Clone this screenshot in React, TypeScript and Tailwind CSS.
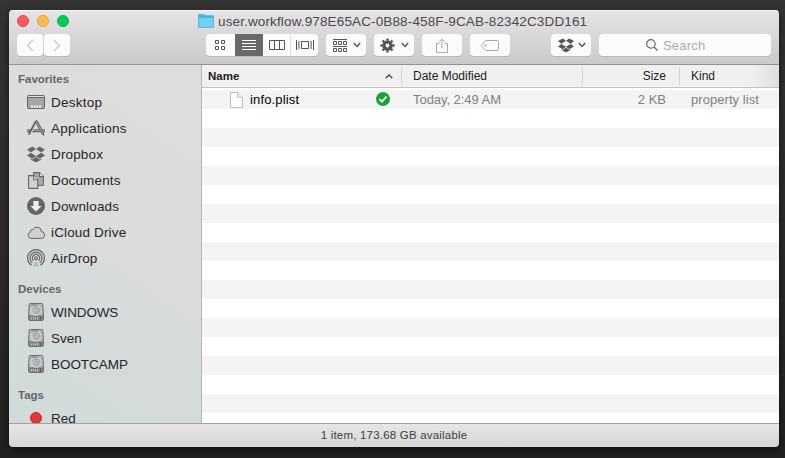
import React from "react";

const font = "font-['Liberation_Sans',Arial,sans-serif]";

const DropboxIcon = ({ className = "" }: { className?: string }) => (
  <svg className={className} viewBox="0 0 18 16" fill="currentColor">
    <path d="M5.4 0 9 2.6 3.7 5.9 0 3Z" />
    <path d="M12.6 0 9 2.6l5.3 3.3L18 3Z" />
    <path d="M0 9.1 3.7 6.2 9 9.5 5.4 12.2Z" />
    <path d="M18 9.1 14.3 6.2 9 9.5l3.6 2.7Z" />
    <path d="M9 10.2 5.4 13 3.8 12v1.2L9 16l5.2-2.8V12l-1.6 1Z" />
  </svg>
);

const DesktopIcon = () => (
  <svg width="18" height="14" viewBox="0 0 18 14">
    <rect x=".5" y=".5" width="17" height="13" rx="1" fill="#a6a6a6" stroke="#666" />
    <path d="M1 1.5h16" stroke="#e2e2e2" />
    <path d="M1 2.5h16" stroke="#666" />
    <path d="M4 10.5h10V13H4Z" fill="#eee" />
    <path d="M6.5 10.5V13M9 10.5V13M11.5 10.5V13" stroke="#999" strokeWidth=".8" />
  </svg>
);

const AppsIcon = () => (
  <svg width="18" height="16" viewBox="0 0 18 16" fill="none" stroke="#666">
    <path d="M8.6 1.6 1.8 14.6" strokeWidth="2" />
    <path d="M8.2 1.2 9.6.6l1 .6 5.8 11.6.4 2.6-1.9-1.4Z" fill="#999" strokeWidth="1" />
    <path d="M0 9.9h4M6.2 9.9h6M15 9.9h3M0 11.6h3M5.4 11.6h7.6M16 11.6h2" strokeWidth="1.1" />
  </svg>
);

const DocsIcon = () => (
  <svg width="16" height="17" viewBox="0 0 16 17" fill="#d2d2d2" stroke="#656565" strokeWidth="1.1">
    <path d="M5.6.6h6l3.8 3.8v8.8H5.6Z" fill="#aaa" />
    <path d="M11.5.6v4h4" fill="#e5e5e5" />
    <path d="M.6 3.6h5.2l4 4v8.8H.6Z" />
    <path d="M5.7 3.6v4.2h4.1" fill="#eee" />
  </svg>
);

const DownloadsIcon = () => (
  <svg width="18" height="18" viewBox="0 0 18 18">
    <circle cx="9" cy="9" r="9" fill="#666" />
    <path d="M6.4 4h5.2v5h3L9 14.4 3.4 9h3Z" fill="#f0efef" />
  </svg>
);

const CloudIcon = () => (
  <svg width="18" height="13" viewBox="0 0 18 13">
    <path d="M4 12.4a3.3 3.3 0 0 1-.6-6.4 2.2 2.2 0 0 1 2.7-2.5 4.4 4.4 0 0 1 8.3 2.1 3.4 3.4 0 0 1-.2 6.8Z" fill="#d0d0d0" stroke="#666" />
  </svg>
);

const AirDropIcon = () => (
  <svg width="18" height="18" viewBox="0 0 18 18" fill="none" stroke="#666" strokeWidth="1.2">
    <path d="M4.5 16.2a8.4 8.4 0 1 1 9 0" />
    <path d="M5.3 13.9a6 6 0 1 1 7.4 0" />
    <path d="M6.6 11.9a3.7 3.7 0 1 1 4.8 0" />
    <circle cx="9" cy="9.2" r="1.4" />
    <path d="m9 11.5-3 5.5q3 1 6 0Z" fill="#888" stroke="none" opacity=".4" />
  </svg>
);

const DiskIcon = () => (
  <svg width="16" height="18" viewBox="0 0 16 18">
    <path d="M2.2.5h11.6q.9 0 1 .9l.7 11.8v3.3q0 1-1 1h-13q-1 0-1-1v-3.3l.7-11.8q.1-.9 1-.9Z" fill="#b4b7b7" stroke="#6d7070" />
    <path d="M1 13.5h14v3q0 .5-.5.5h-13q-.5 0-.5-.5Z" fill="#858888" />
    <path d="M.5 13.1h15" stroke="#636666" />
    <path d="M3.5 14.3v2M5.5 14.3v2M7.5 14.3v2M9.5 14.3v2" stroke="#c6c9c9" strokeWidth=".9" />
    <path d="M12.5 14v2.6" stroke="#555" />
    <ellipse cx="8" cy="7.4" rx="5.4" ry="4.8" fill="#c4c7c7" stroke="#dfe1e1" strokeWidth=".8" />
    <path d="M4.2 6.2C5 3.9 8.8 3.2 10.9 4.9 12.7 6.5 12 9.6 9.7 10.4 7.4 11 5.5 9.6 5.9 7.6 6.3 5.8 8.8 5.6 9.6 6.9c.6 1.1-.4 2.2-1.4 1.9" fill="none" stroke="#8a8d8d" strokeWidth=".9" />
    <path d="M3.5 2.1h6" stroke="#6d7070" strokeWidth=".9" />
  </svg>
);

const Chevron = () => (
  <svg width="8" height="6" viewBox="0 0 8 6" fill="none" stroke="#575757" strokeWidth="1.5">
    <path d="m.8 1 3.2 3.4L7.2 1" />
  </svg>
);

const button = "flex h-[22px] items-center rounded-[4px] bg-[#fbfbfb] shadow-[0_1px_0_#b9b9b9]";

const GearIcon = () => (
  <svg width="15" height="15" viewBox="-7.5 -7.5 15 15">
    <circle r="3.6" fill="none" stroke="#565656" strokeWidth="3.4" />
    <g stroke="#565656" strokeWidth="2.4">
      <path d="M0-7.1V-5M0 7.1V5M-7.1 0H-5M7.1 0H5M-5-5-3.5-3.5M5 5 3.5 3.5M-5 5-3.5 3.5M5-5 3.5-3.5" />
    </g>
  </svg>
);

function Toolbar() {
  return (
    <div className="h-[55px] shrink-0 border-b border-[#929292] bg-linear-to-b from-[#e6e4e6] to-[#cbc9cb] shadow-[inset_0_1px_0_#f5f4f5]">
      <div className="flex h-6 items-center pl-2">
        <div className="-mt-[3px] flex w-[181px] gap-2 pt-px">
          <span className="size-3 rounded-full border border-[#e04548] bg-[#fc5b5d]" />
          <span className="size-3 rounded-full border border-[#dfa041] bg-[#fdbc4c]" />
          <span className="size-3 rounded-full border border-[#0eaf4a] bg-[#00ca56]" />
        </div>
        <svg className="-mt-[2px]" width="16" height="14" viewBox="0 0 16 14">
          <path d="M.4 12V1.2Q.4.4 1.2.4h4.4L7 1.7h7.8q.8 0 .8.8V13.5H.4Z" fill="#4bb5dc" stroke="#46a9ce" strokeWidth=".8" />
          <path d="M.8 4h14.4v9.2H.8Z" fill="#73cff2" />
        </svg>
        <span className="-mt-px ml-[4px] whitespace-nowrap text-[13.5px] leading-4 tracking-[0.135px] text-[#4a4a4a]">
          user.workflow.978E65AC-0B88-458F-9CAB-82342C3DD161
        </span>
      </div>
      <div className="flex pl-2">
        <div className="flex w-[189px] gap-px">
          {["M7 1 1.5 6.5 7 12", "m1 1 5.5 5.5L1 12"].map((d) => (
            <div key={d} className={`${button} w-[26px] justify-center`}>
              <svg width="8" height="13" viewBox="0 0 8 13" fill="none" stroke="#cecece" strokeWidth="1.5"><path d={d} /></svg>
            </div>
          ))}
        </div>
        <div className={`${button} w-[112px] overflow-hidden`}>
          <div className="flex h-full w-[29px] items-center justify-center">
            <svg width="11" height="10" viewBox="0 0 11 10" fill="none" stroke="#555">
              <path d="M.5.5h3v3h-3ZM6.5.5h3v3h-3ZM.5 6.5h3v3h-3ZM6.5 6.5h3v3h-3Z" />
            </svg>
          </div>
          <div className="flex h-full w-7 items-center justify-center bg-[#696969]">
            <svg width="14" height="10" viewBox="0 0 14 10" stroke="#fff"><path d="M0 .5h14M0 3.5h14M0 6.5h14M0 9.5h14" /></svg>
          </div>
          <div className="flex h-full w-[27px] items-center justify-center">
            <svg width="16" height="10" viewBox="0 0 16 10" fill="none" stroke="#555"><path d="M.5.5h15v9H.5ZM5.5.5v9M10.5.5v9" /></svg>
          </div>
          <div className="flex h-full w-7 items-center justify-center border-l border-[#dedede]">
            <svg width="18" height="10" viewBox="0 0 18 10" fill="none" stroke="#555"><path d="M5.5 1.5h7v7h-7ZM.5 0v10M2.9 1v8M15.1 1v8M17.5 0v10" /></svg>
          </div>
        </div>
        <div className={`${button} ml-2 w-10 justify-between pl-[7px] pr-[5px]`}>
          <svg width="14" height="13" viewBox="0 0 14 13" fill="none" stroke="#555">
            <path d="M0 .5h14M.5 2.5h3v3h-3ZM5.5 2.5h3v3h-3ZM10.5 2.5h3v3h-3ZM0 7.5h14M.5 9.5h3v3h-3ZM5.5 9.5h3v3h-3ZM10.5 9.5h3v3h-3Z" />
          </svg>
          <Chevron />
        </div>
        <div className={`${button} ml-2 w-10 justify-between pl-[6px] pr-[5px]`}>
          <GearIcon />
          <Chevron />
        </div>
        <div className={`${button} ml-2 w-10 justify-center`}>
          <svg width="12" height="15" viewBox="0 0 12 15" fill="none" stroke="#a9a9a9">
            <path d="M3.5 5.5h-3v9h11v-9h-3M6 10V1M3.3 3.7 6 1l2.7 2.7" />
          </svg>
        </div>
        <div className={`${button} ml-2 w-10 justify-center`}>
          <svg width="18" height="11" viewBox="0 0 18 11" fill="none" stroke="#a9a9a9">
            <path d="M4.8.5h11.4q1.3 0 1.3 1.3v7.4q0 1.3-1.3 1.3H4.8L.7 6.4q-.5-.9 0-1.8Z" />
            <circle cx="4.3" cy="5.5" r=".7" />
          </svg>
        </div>
        <div className={`${button} ml-[41px] w-10 justify-between pl-[7px] pr-[5px] text-[#565656]`}>
          <DropboxIcon className="h-[15px] w-4" />
          <Chevron />
        </div>
        <div className={`${button} ml-2 w-[172px] pl-[47px]`}>
          <svg width="12" height="12" viewBox="0 0 12 12" fill="none" stroke="#666" strokeWidth="1.2">
            <circle cx="4.9" cy="4.9" r="4.2" />
            <path d="m8 8 3.5 3.5" />
          </svg>
          <span className="ml-[5px] pt-px text-[13px] tracking-[0.2px] text-[#acacac]">Search</span>
        </div>
      </div>
    </div>
  );
}

const heading = "h-[14px] pl-[9px] text-[11.5px] font-bold leading-[14px] text-[#666]";

function Item({ label, tracking = "tracking-[0.25px]", children }: { label: string; tracking?: string; children: React.ReactNode }) {
  return (
    <div className="flex h-[26px] items-center pl-[18px]">
      <div className="flex w-[18px] justify-center">{children}</div>
      <span className={`ml-[6px] whitespace-nowrap pt-[2px] text-[13.5px] leading-5 text-[#262626] ${tracking}`}>{label}</span>
    </div>
  );
}

function Sidebar() {
  return (
    <div className="w-[193px] shrink-0 overflow-hidden border-r border-[#b5b5b5] bg-[linear-gradient(35deg,#d1dada_0%,#d6dbdb_35%,#dddcdc_60%,#dedddd_100%)] pt-[7px]">
      <div className={heading}>Favorites</div>
      <div className="pt-[3px]">
        <Item label="Desktop"><DesktopIcon /></Item>
        <Item label="Applications"><AppsIcon /></Item>
        <Item label="Dropbox" tracking="tracking-[0.15px]"><DropboxIcon className="h-[17px] w-[18px] text-[#666]" /></Item>
        <Item label="Documents" tracking="tracking-[0.15px]"><DocsIcon /></Item>
        <Item label="Downloads" tracking="tracking-[0.15px]"><DownloadsIcon /></Item>
        <Item label="iCloud Drive" tracking="tracking-[0.15px]"><CloudIcon /></Item>
        <Item label="AirDrop" tracking="tracking-[0.1px]"><AirDropIcon /></Item>
      </div>
      <div className={`${heading} mt-[11px]`}>Devices</div>
      <div className="pt-[3px]">
        <Item label="WINDOWS" tracking="tracking-[-0.15px]"><DiskIcon /></Item>
        <Item label="Sven" tracking="tracking-[0px]"><DiskIcon /></Item>
        <Item label="BOOTCAMP" tracking="tracking-[-0.05px]"><DiskIcon /></Item>
      </div>
      <div className={`${heading} mt-[11px]`}>Tags</div>
      <div className="pt-[3px]">
        <Item label="Red" tracking="tracking-[0px]"><span className="size-3 rounded-full border border-[#d32026] bg-[#db383c]" /></Item>
      </div>
    </div>
  );
}

function FileList() {
  return (
    <div className="flex min-w-0 flex-1 flex-col overflow-hidden bg-white">
      <div className="flex h-[23px] shrink-0 items-center border-b border-[#c4c4c4] bg-[linear-gradient(90deg,#f0f0f0_95%,#dedede)] text-[12px] text-[#222]">
        <div className="flex h-[18px] w-[200px] items-center justify-between border-r border-[#d3d3d3] pl-1.5 pr-2">
          <span className="pt-px text-[11.5px] font-bold">Name</span>
          <svg width="8" height="5" viewBox="0 0 8 5" fill="none" stroke="#444" strokeWidth="1.3"><path d="m.7 4.3 3.3-3.3 3.3 3.3" /></svg>
        </div>
        <div className="flex h-[18px] w-[181px] items-center border-r border-[#d3d3d3] pl-[11px]">Date Modified</div>
        <div className="flex h-[18px] w-[97px] items-center justify-end border-r border-[#d3d3d3] pr-[13px]">Size</div>
        <div className="pl-[11px]">Kind</div>
      </div>
      <div className="mt-[2px] flex h-[19px] shrink-0 items-center bg-[#f4f4f4] text-[13px] text-[#808080]">
        <div className="flex w-[200px] items-center pl-7">
          <svg width="13" height="16" viewBox="0 0 13 16">
            <path d="M.5.5h7.2l4.8 4.8v10.2H.5Z" fill="#fff" stroke="#bdbdbd" />
            <path d="M7.7.5v4.8h4.8" fill="#eee" stroke="#bdbdbd" />
          </svg>
          <span className="ml-[7px] tracking-[0.15px] text-black">info.plist</span>
          <svg className="ml-auto mr-3 -mt-px" width="14" height="14" viewBox="0 0 14 14">
            <circle cx="7" cy="7" r="7" fill="#19a534" />
            <path d="m3.5 7.2 2.4 2.5 4.5-5" fill="none" stroke="#fff" strokeWidth="1.8" />
          </svg>
        </div>
        <div className="w-[181px] pl-[11px] tracking-[-0.05px]">Today, 2:49 AM</div>
        <div className="w-[97px] pr-[14px] text-right">2 KB</div>
        <div className="whitespace-nowrap pl-[11px] tracking-[0.05px]">property list</div>
      </div>
      <div>
        {Array.from({ length: 17 }, (_, i) => (
          <div key={i} className="h-[19px] odd:bg-white even:bg-[#f4f4f4]" />
        ))}
      </div>
    </div>
  );
}

export default function App() {
  return (
    <div className={`${font} h-[458px] w-[785px] overflow-hidden bg-linear-to-b from-[#343434] via-[#2c2c2c] to-[#222] pl-[9px] pt-[10px]`}>
      <div className="flex h-[437px] w-[770px] flex-col overflow-hidden rounded-[4px] shadow-[0_3px_8px_#0009]">
        <Toolbar />
        <div className="flex h-[358px] shrink-0 overflow-hidden">
          <Sidebar />
          <FileList />
        </div>
        <div className="flex h-6 shrink-0 items-center justify-center border-t border-[#a0a0a0] bg-linear-to-b from-[#e6e6e6] to-[#d5d5d5] text-[11.5px] tracking-[0.2px] text-[#3e3e3e]">
          1 item, 173.68 GB available
        </div>
      </div>
    </div>
  );
}
